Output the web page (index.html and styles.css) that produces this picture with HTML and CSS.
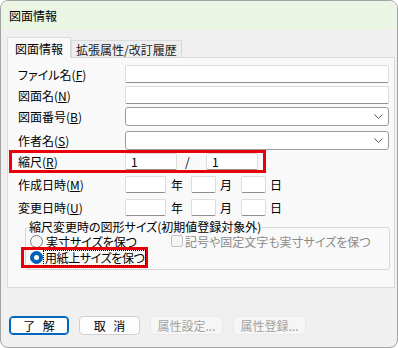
FILE: index.html
```html
<!DOCTYPE html>
<html lang="ja">
  <head>
    <meta charset="UTF-8" />
    <title>図面情報</title>
    <link rel="stylesheet" href="styles.css">
  </head>
  <body>
    <div class="window">
      <div class="titlebar">図面情報</div>

      <div class="tabs">
        <div class="tab active">図面情報</div>
        <div class="tab">拡張属性/改訂履歴</div>
      </div>

      <div class="panel">
        <div class="row r1">
          <span class="lbl">ファイル名(<u>F</u>)</span>
          <input class="field wide" type="text" />
        </div>
        <div class="row r2">
          <span class="lbl">図面名(<u>N</u>)</span>
          <input class="field wide" type="text" />
        </div>
        <div class="row r3">
          <span class="lbl">図面番号(<u>B</u>)</span>
          <div class="select">
            <svg width="9" height="5" viewBox="0 0 9 5"><path d="M0.5 0.5 L4.5 4.5 L8.5 0.5" fill="none" stroke="#5a5a5a" stroke-width="1"/></svg>
          </div>
        </div>
        <div class="row r4">
          <span class="lbl">作者名(<u>S</u>)</span>
          <div class="select">
            <svg width="9" height="5" viewBox="0 0 9 5"><path d="M0.5 0.5 L4.5 4.5 L8.5 0.5" fill="none" stroke="#5a5a5a" stroke-width="1"/></svg>
          </div>
        </div>
        <div class="row mark">
          <span class="lbl">縮尺(<u>R</u>)</span>
          <input class="field scale" type="text" value="1" />
          <span class="slash">/</span>
          <input class="field scale" type="text" value="1" />
        </div>
        <div class="row d1">
          <span class="lbl">作成日時(<u>M</u>)</span>
          <input class="field yy" type="text" />
          <span class="unit">年</span>
          <input class="field md" type="text" />
          <span class="unit">月</span>
          <input class="field md" type="text" />
          <span class="unit">日</span>
        </div>
        <div class="row d2">
          <span class="lbl">変更日時(<u>U</u>)</span>
          <input class="field yy" type="text" />
          <span class="unit">年</span>
          <input class="field md" type="text" />
          <span class="unit">月</span>
          <input class="field md" type="text" />
          <span class="unit">日</span>
        </div>

        <fieldset class="group">
          <legend>縮尺変更時の図形サイズ(初期値登録対象外)</legend>
          <div class="opts">
            <div class="opt first"><span class="radio"></span>実寸サイズを保つ</div>
            <div class="opt check"><span class="box"></span>記号や固定文字も実寸サイズを保つ</div>
            <div class="opt mark2"><span class="radio on"></span><span class="focus">用紙上サイズを保つ</span></div>
          </div>
        </fieldset>
      </div>

      <div class="buttons">
        <button class="btn default">了 解</button>
        <button class="btn cancel">取 消</button>
        <button class="btn off" disabled>属性設定...</button>
        <button class="btn off" disabled>属性登録...</button>
      </div>
    </div>
  </body>
</html>
```

FILE: styles.css
```css
body {
  margin: 0;
  font-family: "Noto Sans CJK JP", sans-serif;
  font-size: 12px;
  font-feature-settings: "palt";
  color: #000;
  background: #fff;
}
.window {
  width: 398px;
  height: 348px;
  box-sizing: border-box;
  border: 1px solid #a3a3a3;
  border-radius: 8px;
  background: #f0f0f0;
  overflow: hidden;
}
.titlebar {
  height: 29px;
  padding-left: 8px;
  display: flex;
  align-items: center;
  background: #ebf5e3;
}
.tabs {
  display: flex;
  align-items: flex-end;
  padding: 7px 0 0 6px;
}
.tab {
  height: 17px;
  box-sizing: border-box;
  padding: 0 4px;
  border: 1px solid #dadada;
  border-bottom: none;
  background: #eeeeee;
  display: flex;
  align-items: center;
  color: #1a1a1a;
}
.tab.active {
  height: 21px;
  margin-bottom: -1px;
  padding: 0 7px;
  background: #f9f9f9;
  position: relative;
  z-index: 1;
  color: #000;
}
.panel {
  margin-left: 6px;
  width: 388px;
  height: 231px;
  box-sizing: border-box;
  border: 1px solid #dadada;
  background: #f9f9f9;
  padding: 7px 0 0 10px;
}
.row {
  display: flex;
  align-items: center;
  height: 18px;
}
.r2, .r3 { margin-top: 3px; }
.r3, .r4 { height: 19px; }
.r4 { margin-top: 5px; }
.lbl {
  width: 107px;
  flex-shrink: 0;
}
.field {
  height: 18px;
  box-sizing: border-box;
  margin: 0;
  padding: 0 0 0 5px;
  border: 1px solid #dcdcdc;
  border-bottom-color: #8d8d8d;
  border-radius: 2px;
  background: #fff;
  font: inherit;
  outline: none;
}
.wide { width: 264px; }
.select {
  width: 264px;
  height: 19px;
  box-sizing: border-box;
  border: 1px solid #9c9c9c;
  border-radius: 3px;
  background: #fff;
  display: flex;
  align-items: center;
  justify-content: flex-end;
  padding-right: 5px;
}
.mark {
  height: 23px;
  width: 257px;
  box-sizing: border-box;
  margin-left: -9px;
  padding-left: 6px;
  border: 3px solid #e8000b;
}
.mark .field { height: 17px; }
.scale { width: 52px; }
.slash {
  width: 29px;
  padding-left: 8px;
  box-sizing: border-box;
}
.d1, .d2 { height: 17px; }
.d1 { margin-top: 3px; }
.d2 { margin-top: 6px; }
.d1 .field, .d2 .field { height: 17px; }
.yy { width: 41px; }
.md { width: 25px; }
.unit { margin: 0 8px 0 5px; }
.md + .unit { margin: 0 9px 0 4px; }
.group {
  margin: 4px 0 0 7px;
  width: 365px;
  height: 50px;
  box-sizing: border-box;
  padding: 0;
  border: 1px solid #d6d6d6;
  border-radius: 3px;
}
.group legend {
  margin-left: 2px;
  padding: 0 1px;
  line-height: 14px;
}
.opts {
  display: grid;
  grid-template-columns: 145px auto;
}
.opt {
  display: flex;
  align-items: center;
  height: 14px;
  white-space: nowrap;
}
.first { padding-left: 4px; }
.radio {
  width: 13px;
  height: 13px;
  flex-shrink: 0;
  box-sizing: border-box;
  border: 1px solid #7a7a7a;
  border-radius: 50%;
  background: #f4f4f4;
  margin-right: 3px;
  display: flex;
  align-items: center;
  justify-content: center;
}
.radio.on {
  border-color: #005fb8;
  background: #005fb8;
}
.radio.on::after {
  content: "";
  width: 5px;
  height: 5px;
  border-radius: 50%;
  background: #fff;
}
.check { color: #8a8a8a; }
.box {
  width: 12px;
  height: 12px;
  flex-shrink: 0;
  box-sizing: border-box;
  border: 1px solid #c2c2c2;
  border-radius: 2px;
  background: #f5f5f5;
  margin-right: 2px;
}
.mark2 {
  grid-column: 1;
  width: 127px;
  height: 21px;
  box-sizing: border-box;
  margin: -1px 0 0 -5px;
  padding-left: 6px;
  border: 3px solid #e8000b;
}
.mark2 .radio { margin-right: 1px; }
.focus {
  outline: 1px dotted #000;
  padding: 0 1px;
  line-height: 14px;
  letter-spacing: -0.4px;
}
.buttons {
  display: flex;
  gap: 10px;
  margin-top: 28px;
  padding-left: 8px;
}
.btn {
  width: 60px;
  height: 19px;
  box-sizing: border-box;
  padding: 0;
  border: 1px solid #d0d0d0;
  border-radius: 4px;
  background: #fdfdfd;
  font: inherit;
  color: #000;
  display: flex;
  align-items: center;
  justify-content: center;
  word-spacing: 5px;
}
.btn.default {
  border-color: #0067c0;
  box-shadow: inset 0 0 0 1px #0067c0;
}
.btn.cancel { width: 61px; }
.btn.off {
  width: 73px;
  color: #a3a3a3;
  background: #f6f6f6;
  border-color: #e9e9e9;
}
```
